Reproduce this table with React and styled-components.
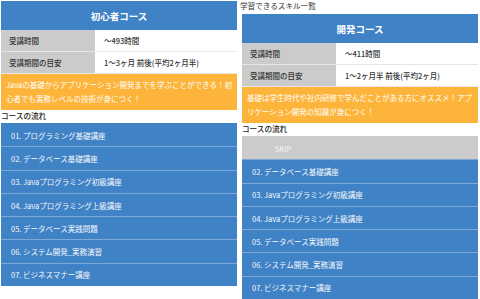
import React from 'react';
import styled, { createGlobalStyle } from 'styled-components';

const GlobalStyle = createGlobalStyle`
  * { box-sizing: border-box; }
  body {
    margin: 0;
    background: #fff;
    font-family: "Noto Sans CJK JP", "Noto Sans", sans-serif;
    color: #333;
  }
`;

const courses = [
  {
    title: '初心者コース',
    hours: '〜493時間',
    period: '1〜3ヶ月 前後(平均2ヶ月半)',
    note: 'Javaの基礎からアプリケーション開発までを学ぶことができる！初心者でも実務レベルの技術が身につく！',
    skip: false,
  },
  {
    heading: '学習できるスキル一覧',
    title: '開発コース',
    hours: '〜411時間',
    period: '1〜2ヶ月半 前後(平均2ヶ月)',
    note: '基礎は学生時代や社内研修で学んだことがある方にオススメ！アプリケーション開発の知識が身につく！',
    skip: true,
  },
];

const lessons = [
  '01. プログラミング基礎講座',
  '02. データベース基礎講座',
  '03. Javaプログラミング初級講座',
  '04. Javaプログラミング上級講座',
  '05. データベース実践問題',
  '06. システム開発_実務演習',
  '07. ビジネスマナー講座',
];

function App() {
  return (
    <>
      <GlobalStyle />
      <Page>
        {courses.map((c) => (
          <Column key={c.title}>
            {c.heading && <Heading>{c.heading}</Heading>}
            <CardTitle>{c.title}</CardTitle>
            <Row>
              <Label>受講時間</Label>
              <Value>{c.hours}</Value>
            </Row>
            <Row>
              <Label>受講期間の目安</Label>
              <Value>{c.period}</Value>
            </Row>
            <Note>{c.note}</Note>
            <FlowTitle>コースの流れ</FlowTitle>
            <List>
              {lessons.map((l, i) =>
                c.skip && i === 0 ? (
                  <Skip key={l}>SKIP</Skip>
                ) : (
                  <Item key={l}>{l}</Item>
                )
              )}
            </List>
          </Column>
        ))}
      </Page>
    </>
  );
}

export default App;

const Page = styled.div`
  width: 480px;
  height: 299px;
  padding: 1px 2px 0 1px;
  display: grid;
  grid-template-columns: 236px 236px;
  column-gap: 5px;
  align-items: start;
  overflow: hidden;
`;

const Column = styled.div`
  display: flex;
  flex-direction: column;
`;

const Heading = styled.div`
  height: 13px;
  line-height: 11px;
  font-size: 7.6px;
  color: #333;
  margin-top: -1px;
  margin-bottom: 1px;
  margin-left: -2px;
`;

const CardTitle = styled.div`
  height: 29px;
  background: #3f82c6;
  color: #fff;
  font-size: 9.5px;
  font-weight: 700;
  display: flex;
  align-items: center;
  justify-content: center;
`;

const Row = styled.div`
  display: grid;
  grid-template-columns: 94px 1fr;
  height: 22px;
  border-bottom: 1px solid #e6e6e6;
`;

const Label = styled.div`
  background: #cbcbcb;
  padding-left: 8px;
  font-size: 7.5px;
  font-weight: 500;
  display: flex;
  align-items: center;
  color: #333;
`;

const Value = styled.div`
  background: #fff;
  padding-left: 9px;
  font-size: 7.5px;
  font-weight: 500;
  display: flex;
  align-items: center;
  color: #333;
`;

const Note = styled.div`
  background: #fdb43a;
  color: #fff;
  font-size: 7.5px;
  line-height: 14px;
  padding: 4px 5px;
  height: 36px;
  overflow: hidden;
`;

const FlowTitle = styled.div`
  height: 13px;
  line-height: 12px;
  font-size: 7.6px;
  font-weight: 500;
  color: #222;
`;

const List = styled.div`
  display: flex;
  flex-direction: column;
`;

const Item = styled.div`
  height: 23.3px;
  background: #3f82c6;
  border-top: 1px solid #7ca9d9;
  color: #f4f7fb;
  font-size: 7.5px;
  font-weight: 400;
  padding-left: 10px;
  display: flex;
  align-items: center;
  &:first-child {
    border-top-color: #3f82c6;
  }
`;

const Skip = styled(Item)`
  background: #cbcbcb;
  border-top-color: #cbcbcb;
  padding-left: 33px;
  &:first-child {
    border-top-color: #cbcbcb;
  }
`;
